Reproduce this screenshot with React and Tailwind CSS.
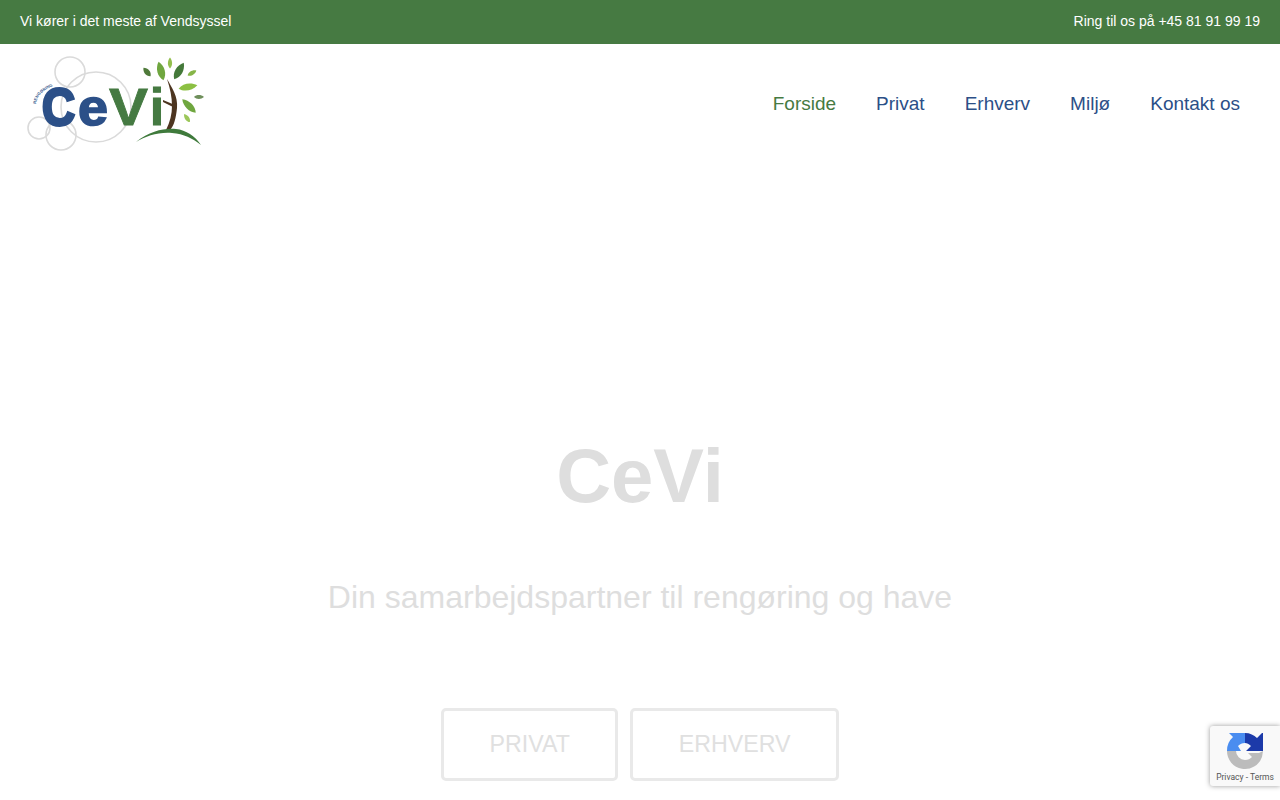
const leaves = [
  { x: 147, y: 72, w: 3.6, h: 5.5, rot: -40, fill: '#4f7a3a' },
  { x: 161, y: 71, w: 5, h: 9.5, rot: -15, fill: '#6fa63f' },
  { x: 170, y: 63, w: 2.8, h: 5.5, rot: 0, fill: '#93bf4e' },
  { x: 179, y: 71, w: 5, h: 9.5, rot: 30, fill: '#44793a' },
  { x: 192, y: 73, w: 2.8, h: 5, rot: 60, fill: '#86b548' },
  { x: 188, y: 87, w: 4.5, h: 9.5, rot: 80, fill: '#8cc043' },
  { x: 199, y: 97, w: 2.6, h: 5, rot: 90, fill: '#6f8f5b' },
  { x: 189, y: 106, w: 4.5, h: 9.5, rot: -45, fill: '#6fa63f' },
  { x: 187, y: 118, w: 2.8, h: 5, rot: -35, fill: '#9cc75a' },
]

function Logo() {
  return (
    <svg width="192" height="108" viewBox="20 50 192 108" className="block">
      <g fill="none" stroke="#dadada" strokeWidth="1.6">
        <circle cx="70" cy="72" r="15" />
        <circle cx="96" cy="107" r="35" />
        <circle cx="39" cy="128" r="11" />
        <circle cx="61" cy="135" r="15" />
      </g>
      <path id="logo-arc" d="M36 104 C37 95 45 88 57 85" fill="none" />
      <text fontFamily="Liberation Sans, sans-serif" fontSize="4.2" fontWeight="700" fill="#3b5f92">
        <textPath href="#logo-arc">RENGØRING</textPath>
      </text>
      <g fontFamily="Liberation Sans, sans-serif" fontWeight="700" fontSize="52">
        <text x="42" y="125" fill="#2c5088" stroke="#2c5088" strokeWidth="3" textLength="33" lengthAdjust="spacingAndGlyphs">C</text>
        <text x="78" y="125" fill="#2c5088" stroke="#2c5088" strokeWidth="1.6" textLength="30" lengthAdjust="spacingAndGlyphs">e</text>
        <text x="109" y="125" fill="#457a42" stroke="#457a42" strokeWidth="0.8" textLength="39" lengthAdjust="spacingAndGlyphs">V</text>
        <text x="150" y="125" fill="#457a42" stroke="#457a42" strokeWidth="1.2" textLength="14" lengthAdjust="spacingAndGlyphs">i</text>
      </g>
      <path d="M167 79 C172 88 178 96 177 108 C176 118 174 126 170 130 L166 130 C170 122 172 114 172 106 C172 97 170 88 167 79 Z" fill="#4d3520" />
      <path d="M163 100 L175 105 L175 108 L163 102 Z" fill="#4d3520" />
      {leaves.map(leaf => (
        <path
          key={`${leaf.x}-${leaf.y}`}
          d={`M0 ${-leaf.h} C${leaf.w} ${-leaf.h * 0.4} ${leaf.w} ${leaf.h * 0.5} 0 ${leaf.h} C${-leaf.w} ${leaf.h * 0.5} ${-leaf.w} ${-leaf.h * 0.4} 0 ${-leaf.h} Z`}
          fill={leaf.fill}
          transform={`translate(${leaf.x} ${leaf.y}) rotate(${leaf.rot})`}
        />
      ))}
      <path d="M136 142 C150 131 164 128 176 129 C186 130 195 136 201 145 C192 138 184 134 172 133 C158 132 146 136 136 142 Z" fill="#3f7a3c" />
    </svg>
  )
}

function RecaptchaIcon() {
  return (
    <svg width="38" height="38" viewBox="0 0 38 38" className="block">
      <path d="M1 19 L10 19 A9 9 0 0 0 19 28 C22 28 24 27 26 25 L22 21 L33 21 L37 19 L36 25 A18 18 0 0 1 1 19 Z" fill="#bcbcbc" />
      <path d="M1 19 A18 18 0 0 1 7 5 L3 1 L19 1 L19 11 C16 11 14 12 12 14 L15 19 Z" fill="#4a8df0" />
      <path d="M19 1 C24 1 28 3 31 6 L36 1 L37 1 L37 19 L20 19 L25 14 C23 12 21 11 19 11 Z" fill="#1c3aa9" />
    </svg>
  )
}

export default function App() {
  return (
    <div className="relative h-[800px] overflow-hidden bg-white font-['Liberation_Sans',Arial,sans-serif]">
      {/* Top bar */}
      <div className="flex h-[44px] items-start justify-between bg-[#467a42] px-5 pt-[11px] text-sm leading-5 text-white">
        <span>Vi kører i det meste af Vendsyssel</span>
        <span>Ring til os på +45 81 91 99 19</span>
      </div>

      {/* Header */}
      <header className="flex h-[120px] items-start justify-between pl-5 pr-10">
        <div className="pt-[6px]">
          <Logo />
        </div>
        <nav className="flex gap-10 pt-[49px] text-[19px] leading-[22px] text-[#2c4f87]">
          <a className="text-[#467a42]">Forside</a>
          <a>Privat</a>
          <a>Erhverv</a>
          <a>Miljø</a>
          <a>Kontakt os</a>
        </nav>
      </header>

      {/* Hero */}
      <section className="flex flex-col items-center pt-[267px]">
        <h1 className="text-[76px] leading-[90px] font-bold text-[#dedede]">CeVi</h1>
        <p className="mt-[56px] text-[32px] leading-[40px] text-[#dedede]">
          Din samarbejdspartner til rengøring og have
        </p>
        <div className="mt-[91px] flex gap-3">
          <a className="rounded-[5px] border-[3px] border-[#e9e9e9] px-[45.5px] py-[20px] text-[23.2px] leading-[27px] text-[#e0e0e0]">
            PRIVAT
          </a>
          <a className="rounded-[5px] border-[3px] border-[#e9e9e9] px-[45.5px] py-[20px] text-[23.2px] leading-[27px] text-[#e0e0e0]">
            ERHVERV
          </a>
        </div>
      </section>

      {/* reCAPTCHA badge */}
      <div className="absolute top-[726px] left-[1210px] flex h-[60px] w-[70px] flex-col items-center rounded-l-[3px] bg-[#f9f9f9] pt-[6px] shadow-[0_0_5px_rgba(128,128,128,0.8)]">
        <RecaptchaIcon />
        <span className="mt-[1px] font-['Roboto',sans-serif] text-[8.5px] leading-[12px] whitespace-nowrap text-[#555555]">
          Privacy - Terms
        </span>
      </div>
    </div>
  )
}
